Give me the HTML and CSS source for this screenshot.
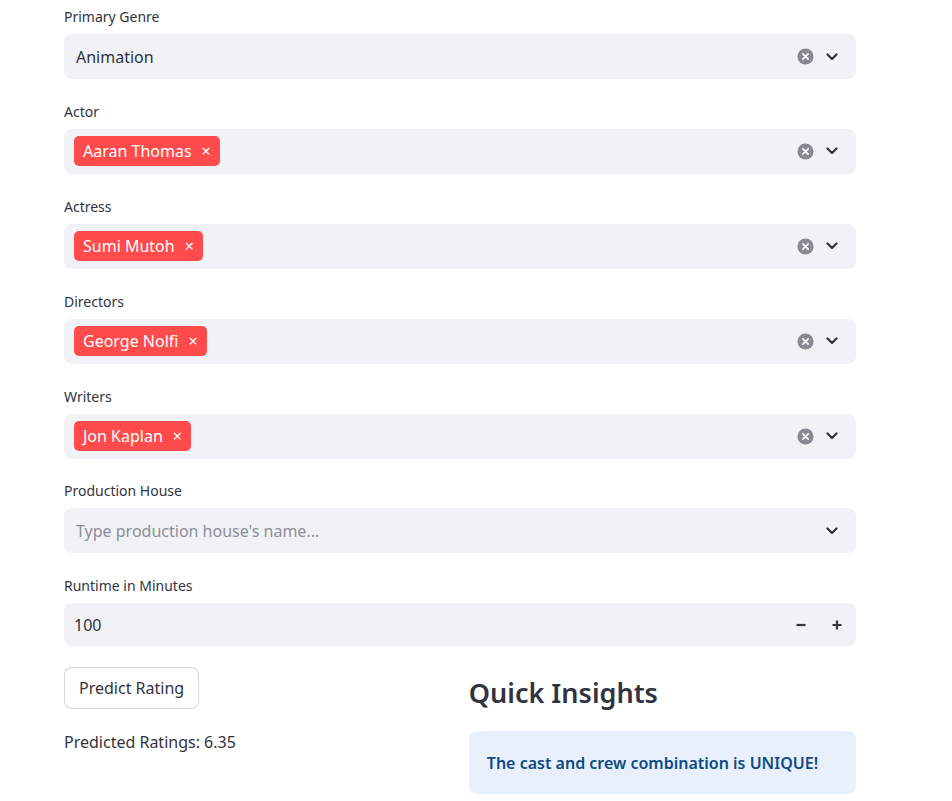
FILE: index.html
```html
<!DOCTYPE html>
<html>
<head>
<meta charset="utf-8">
<link rel="stylesheet" href="styles.css">
</head>
<body>
<div class="main">
  <div class="widget">
    <div class="label">Primary Genre</div>
    <div class="box">
      <div class="value">Animation</div>
      <div class="icons">
        <svg class="clear" viewBox="0 0 18 18"><circle cx="9" cy="9" r="8.5" fill="#878993"/><path d="M6.2 6.2L11.8 11.8M11.8 6.2L6.2 11.8" stroke="#fff" stroke-width="1.8" stroke-linecap="round"/></svg>
        <svg class="chev" viewBox="0 0 12 8"><path d="M1.5 1.5L6 6L10.5 1.5" fill="none" stroke="#31333f" stroke-width="2.2" stroke-linecap="round" stroke-linejoin="round"/></svg>
      </div>
    </div>
  </div>
  <div class="widget">
    <div class="label">Actor</div>
    <div class="box tagbox">
      <div class="tags"><span class="tag">Aaran Thomas<span class="x">×</span></span></div>
      <div class="icons">
        <svg class="clear" viewBox="0 0 18 18"><circle cx="9" cy="9" r="8.5" fill="#878993"/><path d="M6.2 6.2L11.8 11.8M11.8 6.2L6.2 11.8" stroke="#fff" stroke-width="1.8" stroke-linecap="round"/></svg>
        <svg class="chev" viewBox="0 0 12 8"><path d="M1.5 1.5L6 6L10.5 1.5" fill="none" stroke="#31333f" stroke-width="2.2" stroke-linecap="round" stroke-linejoin="round"/></svg>
      </div>
    </div>
  </div>
  <div class="widget">
    <div class="label">Actress</div>
    <div class="box tagbox">
      <div class="tags"><span class="tag">Sumi Mutoh<span class="x">×</span></span></div>
      <div class="icons">
        <svg class="clear" viewBox="0 0 18 18"><circle cx="9" cy="9" r="8.5" fill="#878993"/><path d="M6.2 6.2L11.8 11.8M11.8 6.2L6.2 11.8" stroke="#fff" stroke-width="1.8" stroke-linecap="round"/></svg>
        <svg class="chev" viewBox="0 0 12 8"><path d="M1.5 1.5L6 6L10.5 1.5" fill="none" stroke="#31333f" stroke-width="2.2" stroke-linecap="round" stroke-linejoin="round"/></svg>
      </div>
    </div>
  </div>
  <div class="widget">
    <div class="label">Directors</div>
    <div class="box tagbox">
      <div class="tags"><span class="tag">George Nolfi<span class="x">×</span></span></div>
      <div class="icons">
        <svg class="clear" viewBox="0 0 18 18"><circle cx="9" cy="9" r="8.5" fill="#878993"/><path d="M6.2 6.2L11.8 11.8M11.8 6.2L6.2 11.8" stroke="#fff" stroke-width="1.8" stroke-linecap="round"/></svg>
        <svg class="chev" viewBox="0 0 12 8"><path d="M1.5 1.5L6 6L10.5 1.5" fill="none" stroke="#31333f" stroke-width="2.2" stroke-linecap="round" stroke-linejoin="round"/></svg>
      </div>
    </div>
  </div>
  <div class="widget">
    <div class="label">Writers</div>
    <div class="box tagbox">
      <div class="tags"><span class="tag">Jon Kaplan<span class="x">×</span></span></div>
      <div class="icons">
        <svg class="clear" viewBox="0 0 18 18"><circle cx="9" cy="9" r="8.5" fill="#878993"/><path d="M6.2 6.2L11.8 11.8M11.8 6.2L6.2 11.8" stroke="#fff" stroke-width="1.8" stroke-linecap="round"/></svg>
        <svg class="chev" viewBox="0 0 12 8"><path d="M1.5 1.5L6 6L10.5 1.5" fill="none" stroke="#31333f" stroke-width="2.2" stroke-linecap="round" stroke-linejoin="round"/></svg>
      </div>
    </div>
  </div>
  <div class="widget">
    <div class="label">Production House</div>
    <div class="box">
      <div class="value placeholder">Type production house's name...</div>
      <div class="icons">
        <svg class="chev" viewBox="0 0 12 8"><path d="M1.5 1.5L6 6L10.5 1.5" fill="none" stroke="#31333f" stroke-width="2.2" stroke-linecap="round" stroke-linejoin="round"/></svg>
      </div>
    </div>
  </div>
  <div class="widget">
    <div class="label">Runtime in Minutes</div>
    <div class="box numbox">
      <div class="value num">100</div>
      <div class="steps">
        <svg class="step" viewBox="0 0 12 12"><path d="M1.5 6H10.5" stroke="#31333f" stroke-width="2.2"/></svg>
        <svg class="step" viewBox="0 0 12 12"><path d="M1.5 6H10.5M6 1.5V10.5" stroke="#31333f" stroke-width="2.2"/></svg>
      </div>
    </div>
  </div>
  <div class="cols">
    <div class="col">
      <button class="btn">Predict Rating</button>
      <p class="result">Predicted Ratings: 6.35</p>
    </div>
    <div class="col">
      <h3 class="heading">Quick Insights</h3>
      <div class="info">The cast and crew combination is UNIQUE!</div>
    </div>
  </div>
</div>
</body>
</html>
```
FILE: styles.css
```css
* { box-sizing: border-box; }
html, body { margin: 0; padding: 0; background: #fff; }
body {
  font-family: "Source Sans Pro", "Noto Sans", sans-serif;
  color: #31333f;
}
.main {
  width: 792px;
  margin-left: 64px;
  padding-top: 6px;
  display: flex;
  flex-direction: column;
  gap: 21.9px;
}
.widget { display: flex; flex-direction: column; }
.label {
  height: 22px;
  line-height: 22px;
  font-size: 14px;
  margin-bottom: 6px;
  color: #31333f;
}
.box {
  height: 45px;
  background: #f0f2f6;
  border-radius: 8px;
  display: flex;
  align-items: center;
  justify-content: space-between;
  padding: 0 18px 0 12px;
}
.value { font-size: 16px; }
.placeholder { color: #8d8f97; }
.tagbox { padding-left: 10px; }
.tag {
  display: inline-flex;
  align-items: center;
  height: 30px;
  background: #ff4b4b;
  color: #fff;
  border-radius: 5px;
  padding: 0 9px;
  font-size: 16px;
}
.x { margin-left: 10px; font-size: 16px; }
.icons { display: flex; align-items: center; gap: 12px; }
.clear { width: 17px; height: 17px; }
.chev { width: 12px; height: 8px; }
.numbox { height: 43px; padding-left: 10px; padding-right: 13px; }
.steps { display: flex; gap: 24px; align-items: center; }
.step { width: 12px; height: 12px; }
.cols {
  display: grid;
  grid-template-columns: 1fr 1fr;
  gap: 17.6px;
  margin-top: -1px;
}
.col { display: flex; flex-direction: column; }
.btn {
  align-self: flex-start;
  height: 42px;
  padding: 0 14px;
  background: #fff;
  border: 1px solid rgba(49, 51, 63, 0.2);
  border-radius: 8px;
  font-family: inherit;
  font-size: 16px;
  color: #31333f;
}
.result { margin: 21px 0 0; font-size: 16px; line-height: 24px; }
.heading {
  margin: 8px 0 0;
  font-size: 27px;
  font-weight: 600;
  line-height: 36px;
  color: #31333f;
}
.info {
  margin-top: 20px;
  height: 63px;
  background: #e8f1fb;
  border-radius: 8px;
  padding: 0 18px;
  display: flex;
  align-items: center;
  color: #0e4a86;
  font-size: 16px;
  font-weight: 600;
}
```
